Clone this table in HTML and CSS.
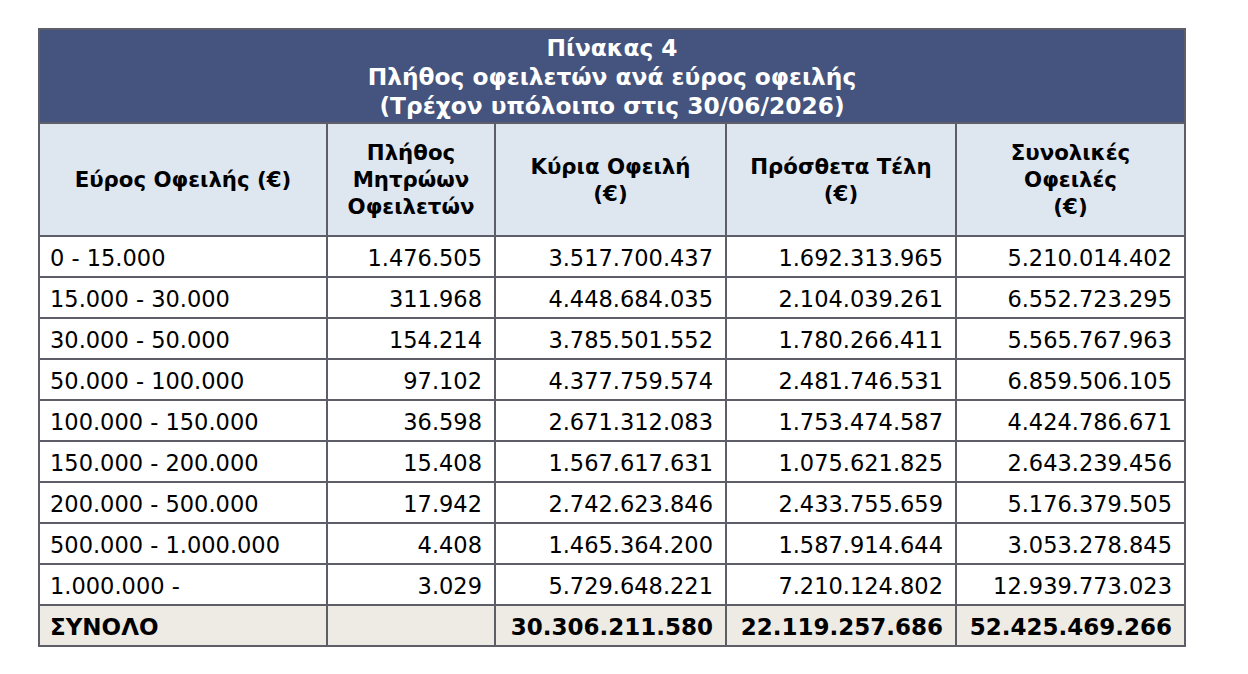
FILE: index.html
```html
<!DOCTYPE html>
<html lang="el">
<head>
<meta charset="utf-8">
<title>Πίνακας 4</title>
<link rel="stylesheet" href="styles.css">
</head>
<body>
<table class="debt-table">
  <colgroup>
    <col class="c1"><col class="c2"><col class="c3"><col class="c4"><col class="c5">
  </colgroup>
  <thead>
    <tr class="title-row">
      <th colspan="5">Πίνακας 4<br>Πλήθος οφειλετών ανά εύρος οφειλής<br>(Τρέχον υπόλοιπο στις 30/06/2026)</th>
    </tr>
    <tr class="head-row">
      <th>Εύρος Οφειλής (€)</th>
      <th>Πλήθος<br>Μητρώων<br>Οφειλετών</th>
      <th>Κύρια Οφειλή<br>(€)</th>
      <th>Πρόσθετα Τέλη<br>(€)</th>
      <th>Συνολικές<br>Οφειλές<br>(€)</th>
    </tr>
  </thead>
  <tbody>
    <tr><td>0 - 15.000</td><td>1.476.505</td><td>3.517.700.437</td><td>1.692.313.965</td><td>5.210.014.402</td></tr>
    <tr><td>15.000 - 30.000</td><td>311.968</td><td>4.448.684.035</td><td>2.104.039.261</td><td>6.552.723.295</td></tr>
    <tr><td>30.000 - 50.000</td><td>154.214</td><td>3.785.501.552</td><td>1.780.266.411</td><td>5.565.767.963</td></tr>
    <tr><td>50.000 - 100.000</td><td>97.102</td><td>4.377.759.574</td><td>2.481.746.531</td><td>6.859.506.105</td></tr>
    <tr><td>100.000 - 150.000</td><td>36.598</td><td>2.671.312.083</td><td>1.753.474.587</td><td>4.424.786.671</td></tr>
    <tr><td>150.000 - 200.000</td><td>15.408</td><td>1.567.617.631</td><td>1.075.621.825</td><td>2.643.239.456</td></tr>
    <tr><td>200.000 - 500.000</td><td>17.942</td><td>2.742.623.846</td><td>2.433.755.659</td><td>5.176.379.505</td></tr>
    <tr><td>500.000 - 1.000.000</td><td>4.408</td><td>1.465.364.200</td><td>1.587.914.644</td><td>3.053.278.845</td></tr>
    <tr><td>1.000.000 -</td><td>3.029</td><td>5.729.648.221</td><td>7.210.124.802</td><td>12.939.773.023</td></tr>
    <tr class="total-row"><td>ΣΥΝΟΛΟ</td><td></td><td>30.306.211.580</td><td>22.119.257.686</td><td>52.425.469.266</td></tr>
  </tbody>
</table>
</body>
</html>
```

FILE: styles.css
```css
html, body {
  margin: 0;
  padding: 0;
  background: #ffffff;
}
body {
  padding: 28px 0 0 38px;
  font-family: "DejaVu Sans", Verdana, sans-serif;
  color: #000;
}
.debt-table {
  border-collapse: collapse;
  table-layout: fixed;
  width: 1146px;
  border: 2px solid #5e5e68;
}
.c1 { width: 288px; }
.c2 { width: 168px; }
.c3 { width: 231px; }
.c4 { width: 230px; }
.c5 { width: 229px; }

.debt-table th,
.debt-table td {
  border: 2px solid #5e5e68;
  padding: 0 12px;
}
.title-row th {
  background: #44547e;
  color: #ffffff;
  font-weight: bold;
  font-size: 23.3px;
  line-height: 29px;
  height: 92px;
  padding: 0;
  text-align: center;
  vertical-align: middle;
}
.head-row th {
  background: #dee6f0;
  font-weight: bold;
  font-size: 21.3px;
  line-height: 27px;
  height: 111px;
  text-align: center;
  vertical-align: middle;
  padding: 0 4px;
}
.debt-table td {
  font-size: 22.5px;
  height: 37px;
  line-height: 24px;
  text-align: right;
  vertical-align: middle;
  padding: 2px 12px 0 10px;
}
.debt-table td:first-child {
  text-align: left;
}
.total-row td {
  background: #eeebe5;
  font-weight: bold;
  font-size: 23px;
}
```
